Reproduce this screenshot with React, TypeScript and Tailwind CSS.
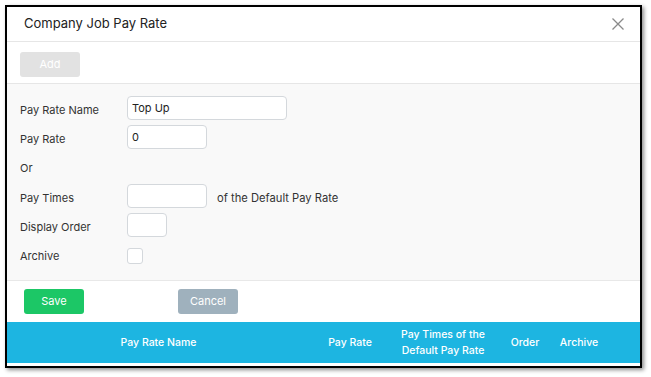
const font = { fontFamily: 'Inter, "Noto Sans", sans-serif' }

function Row({ label, className = 'h-[24px]', children }: { label: string; className?: string; children?: React.ReactNode }) {
  return (
    <div className={`flex items-center ${className}`}>
      <div className="w-[107px] mt-[4px] text-[11px] text-[#333]">{label}</div>
      {children}
    </div>
  )
}

export default function App() {
  return (
    <div className="w-[651px] h-[377px] bg-white pt-[5px] pl-[5px]" style={font}>
      <div className="w-[637px] h-[363px] border-2 border-black bg-white shadow-[2px_2px_4px_rgba(0,0,0,0.45)] flex flex-col overflow-hidden">
        <div className="h-[35px] flex-none flex items-center justify-between border-b border-[#e6e6e6] pl-[17px] pr-[15px]">
          <span className="text-[13px] text-[#222]">Company Job Pay Rate</span>
          <svg width="14" height="14" viewBox="0 0 14 14" className="text-[#8a8a8a]">
            <path d="M1.5 1.5 L12.5 12.5 M12.5 1.5 L1.5 12.5" stroke="currentColor" strokeWidth="1.3" fill="none" />
          </svg>
        </div>
        <div className="h-[42px] flex-none border-b border-[#e6e6e6] pl-[13px] pt-[8px]">
          <button className="w-[60px] h-[25px] rounded-[3px] bg-[#e2e2e2] text-white text-[11px]">Add</button>
        </div>
        <div className="h-[197px] flex-none bg-[#f9f9f9] border-b border-[#e8e8e8] pl-[13px] pt-[12px] flex flex-col gap-[5px]">
          <Row label="Pay Rate Name">
            <input readOnly value="Top Up" className="w-[160px] h-[24px] bg-white border border-[#d4d8dc] rounded-[4px] px-[4px] text-[11px] text-[#222] outline-none" />
          </Row>
          <Row label="Pay Rate">
            <input readOnly value="0" className="w-[80px] h-[24px] bg-white border border-[#d4d8dc] rounded-[4px] px-[4px] text-[11px] text-[#222] outline-none" />
          </Row>
          <Row label="Or" className="h-[25px]" />
          <Row label="Pay Times">
            <input readOnly className="w-[80px] h-[24px] bg-white border border-[#d4d8dc] rounded-[4px] outline-none" />
            <span className="ml-[10px] mt-[4px] text-[11.2px] text-[#333]">of the Default Pay Rate</span>
          </Row>
          <Row label="Display Order">
            <input readOnly className="w-[40px] h-[24px] bg-white border border-[#d4d8dc] rounded-[4px] outline-none" />
          </Row>
          <Row label="Archive">
            <div className="w-[16px] h-[16px] mt-[4px] bg-white border border-[#d4d8dc] rounded-[3px]" />
          </Row>
        </div>
        <div className="h-[41px] flex-none flex items-start pt-[8px] pl-[17px]">
          <button className="w-[60px] h-[25px] rounded-[3px] bg-[#1cc766] text-white text-[11px]">Save</button>
          <button className="ml-[94px] w-[60px] h-[25px] rounded-[3px] bg-[#9fb1bd] text-white text-[11px]">Cancel</button>
        </div>
        <div className="h-[41px] flex-none bg-[#1db5e1] grid grid-cols-[303px_80px_106px_58px_50px_1fr] items-center text-white text-[10.5px] font-medium text-center leading-[16px]">
          <div>Pay Rate Name</div>
          <div>Pay Rate</div>
          <div>Pay Times of the<br />Default Pay Rate</div>
          <div>Order</div>
          <div>Archive</div>
          <div />
        </div>
      </div>
    </div>
  )
}
